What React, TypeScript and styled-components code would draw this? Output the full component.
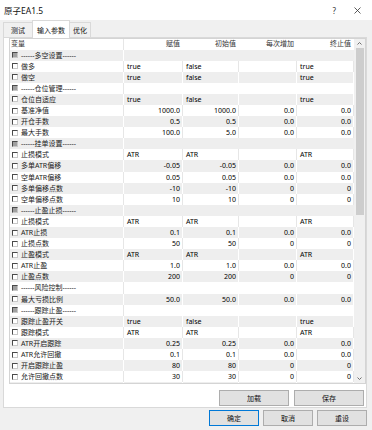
import React from "react";
import styled, { createGlobalStyle } from "styled-components";

const GlobalStyle = createGlobalStyle`
  html, body {
    margin: 0;
    padding: 0;
    background: #f0f0f0;
  }
  body {
    font-family: "Noto Sans", "Noto Sans CJK SC", sans-serif;
  }
`;

const COLS = "114px 59px 56px 58px 57px";

type Param = {
  label: string;
  group?: boolean;
  values?: string[];
};

const G = (label: string): Param => ({ label: `------${label}------`, group: true });
const P = (label: string, ...values: string[]): Param => ({ label, values });

const params: Param[] = [
  G("多空设置"),
  P("做多", "true", "false", "", "true"),
  P("做空", "true", "false", "", "true"),
  G("仓位管理"),
  P("仓位自适应", "true", "false", "", "true"),
  P("基准净值", "1000.0", "1000.0", "0.0", "0.0"),
  P("开仓手数", "0.5", "0.5", "0.0", "0.0"),
  P("最大手数", "100.0", "5.0", "0.0", "0.0"),
  G("挂单设置"),
  P("止损模式", "ATR", "ATR", "", "ATR"),
  P("多单ATR偏移", "-0.05", "-0.05", "0.0", "0.0"),
  P("空单ATR偏移", "0.05", "0.05", "0.0", "0.0"),
  P("多单偏移点数", "-10", "-10", "0", "0"),
  P("空单偏移点数", "10", "10", "0", "0"),
  G("止盈止损"),
  P("止损模式", "ATR", "ATR", "", "ATR"),
  P("ATR止损", "0.1", "0.1", "0.0", "0.0"),
  P("止损点数", "50", "50", "0", "0"),
  P("止盈模式", "ATR", "ATR", "", "ATR"),
  P("ATR止盈", "1.0", "1.0", "0.0", "0.0"),
  P("止盈点数", "200", "200", "0", "0"),
  G("风险控制"),
  P("最大亏损比例", "50.0", "50.0", "0.0", "0.0"),
  G("跟踪止盈"),
  P("跟踪止盈开关", "true", "false", "", "true"),
  P("跟踪模式", "ATR", "ATR", "", "ATR"),
  P("ATR开启跟踪", "0.25", "0.25", "0.0", "0.0"),
  P("ATR允许回撤", "0.1", "0.1", "0.0", "0.0"),
  P("开启跟踪止盈", "80", "80", "0", "0"),
  P("允许回撤点数", "30", "30", "0", "0"),
  P("", "", "", "", ""),
];

const isNumber = (v: string) => /^-?[\d.]+$/.test(v);

const Window = styled.div`
  width: 372px;
  height: 430px;
  background: #f0f0f0;
  display: flex;
  flex-direction: column;
  font-size: 7px;
  color: #000;
  overflow: hidden;
`;

const TitleBar = styled.div`
  height: 20px;
  flex: none;
  background: #fff;
  display: flex;
  align-items: center;
  padding-left: 4px;
  font-size: 8.5px;
  color: #111;
`;

const TitleButtons = styled.div`
  margin-left: auto;
  display: flex;
  align-items: center;
  gap: 18px;
  padding-right: 11px;
  font-size: 8px;
  color: #333;
`;

const TabStrip = styled.div`
  height: 17px;
  flex: none;
  display: flex;
  align-items: flex-end;
  padding-left: 3px;
`;

const Tab = styled.div<{ $active?: boolean; $pad: number }>`
  box-sizing: border-box;
  height: ${(p) => (p.$active ? "18px" : "15px")};
  padding: 0 ${(p) => p.$pad}px;
  display: flex;
  align-items: center;
  background: ${(p) => (p.$active ? "#fff" : "#f0f0f0")};
  border: 1px solid #d9d9d9;
  border-bottom: none;
  margin-bottom: ${(p) => (p.$active ? "-1px" : "0")};
  margin-right: -1px;
  position: relative;
  z-index: ${(p) => (p.$active ? 1 : 0)};
  color: #111;
`;

const Panel = styled.div`
  box-sizing: border-box;
  width: 364px;
  height: 371px;
  margin-left: 3px;
  flex: none;
  background: #fff;
  border: 1px solid #d9d9d9;
  padding-left: 5px;
  display: flex;
  flex-direction: column;
`;

const ListView = styled.div`
  box-sizing: border-box;
  width: 357px;
  height: 346px;
  border: 1px solid #d4d4d4;
  display: flex;
`;

const Table = styled.div`
  width: 344px;
  overflow: hidden;
  display: flex;
  flex-direction: column;
`;

const Row = styled.div<{ $shade?: boolean; $head?: boolean }>`
  flex: none;
  height: ${(p) => (p.$head ? "10.5px" : "11.1px")};
  display: grid;
  grid-template-columns: ${COLS};
  align-items: stretch;
  line-height: ${(p) => (p.$head ? "10.5px" : "11.1px")};
  background: ${(p) => (p.$shade ? "#eeeeee" : "#fff")};
`;

const Cell = styled.div<{ $right?: boolean; $line: string; $span?: number }>`
  box-sizing: border-box;
  padding: 0 2px 0 3px;
  text-align: ${(p) => (p.$right ? "right" : "left")};
  border-right: 1px solid ${(p) => p.$line};
  white-space: nowrap;
  overflow: hidden;
  grid-column: ${(p) => (p.$span ? `span ${p.$span}` : "auto")};
`;

const HeadCell = styled(Cell)`
  color: #333;
`;

const LabelCell = styled(Cell)`
  display: flex;
  align-items: center;
  gap: 3px;
  padding-left: 2px;
  color: #222;
`;

const Check = styled.span<{ $group?: boolean }>`
  box-sizing: border-box;
  width: 6px;
  height: 6px;
  flex: none;
  border-top: 1px solid #4a4a4a;
  border-left: 1px solid #4a4a4a;
  border-right: 1px solid #c8c8c8;
  border-bottom: 1px solid #c8c8c8;
  background: ${(p) => (p.$group ? "#a0a0a0" : "#fff")};
`;

const ScrollBar = styled.div`
  width: 11px;
  background: #f0f0f0;
  display: flex;
  flex-direction: column;
  align-items: center;
`;

const ScrollArrow = styled.div`
  height: 9px;
  flex: none;
  display: flex;
  align-items: center;
  justify-content: center;
`;

const Thumb = styled.div`
  width: 8px;
  height: 167px;
  background: #cdcdcd;
  flex: none;
`;

const Spacer = styled.div`
  flex: 1;
`;

const ButtonRow = styled.div<{ $gap: number }>`
  display: flex;
  justify-content: flex-end;
  gap: ${(p) => p.$gap}px;
`;

const PanelButtons = styled(ButtonRow)`
  margin-top: 6px;
  padding-right: 2px;
`;

const Footer = styled(ButtonRow)`
  margin-top: 2px;
  padding-right: 5px;
`;

const Button = styled.div<{ $w: number; $focus?: boolean }>`
  box-sizing: border-box;
  width: ${(p) => p.$w}px;
  height: 16px;
  display: flex;
  align-items: center;
  justify-content: center;
  background: #e1e1e1;
  border: 1px solid ${(p) => (p.$focus ? "#0078d7" : "#adadad")};
  color: #111;
`;

const Chevron = ({ up }: { up?: boolean }) => (
  <svg width="5" height="3" viewBox="0 0 5 3">
    <polyline
      points={up ? "0.5,2.5 2.5,0.5 4.5,2.5" : "0.5,0.5 2.5,2.5 4.5,0.5"}
      fill="none"
      stroke="#606060"
      strokeWidth="0.9"
    />
  </svg>
);

const CloseIcon = () => (
  <svg width="7" height="7" viewBox="0 0 7 7">
    <path d="M0.5 0.5 L6.5 6.5 M6.5 0.5 L0.5 6.5" stroke="#333" strokeWidth="0.8" />
  </svg>
);

function ParamRow({ p, index }: { p: Param; index: number }) {
  const shade = index % 2 === 0;
  const line = shade ? "#fff" : "#e6e6e6";
  if (p.group) {
    return (
      <Row $shade={shade}>
        <LabelCell $line={line}>
          <Check $group />
          {p.label}
        </LabelCell>
        <Cell $line="transparent" $span={4} />
      </Row>
    );
  }
  return (
    <Row $shade={shade}>
      <LabelCell $line={line}>
        <Check />
        {p.label}
      </LabelCell>
      {(p.values || []).map((v, i) => (
        <Cell key={i} $line={line} $right={isNumber(v)}>
          {v}
        </Cell>
      ))}
    </Row>
  );
}

export default function App() {
  return (
    <>
      <GlobalStyle />
      <Window>
        <TitleBar>
          原子EA1.5
          <TitleButtons>
            <span>?</span>
            <CloseIcon />
          </TitleButtons>
        </TitleBar>
        <TabStrip>
          <Tab $pad={7}>测试</Tab>
          <Tab $pad={4} $active>
            输入参数
          </Tab>
          <Tab $pad={3}>优化</Tab>
        </TabStrip>
        <Panel>
          <ListView>
            <Table>
              <Row $head>
                <HeadCell $line="#e6e6e6" style={{ paddingLeft: 1 }}>
                  变量
                </HeadCell>
                <HeadCell $line="transparent" $right>
                  赋值
                </HeadCell>
                <HeadCell $line="transparent" $right>
                  初始值
                </HeadCell>
                <HeadCell $line="transparent" $right>
                  每次增加
                </HeadCell>
                <HeadCell $line="transparent" $right>
                  终止值
                </HeadCell>
              </Row>
              {params.map((p, i) => (
                <ParamRow key={i} p={p} index={i} />
              ))}
            </Table>
            <ScrollBar>
              <ScrollArrow>
                <Chevron up />
              </ScrollArrow>
              <Thumb />
              <Spacer />
              <ScrollArrow>
                <Chevron />
              </ScrollArrow>
            </ScrollBar>
          </ListView>
          <PanelButtons $gap={5}>
            <Button $w={70}>加载</Button>
            <Button $w={70}>保存</Button>
          </PanelButtons>
        </Panel>
        <Footer $gap={4}>
          <Button $w={50} $focus>
            确定
          </Button>
          <Button $w={50}>取消</Button>
          <Button $w={50}>重设</Button>
        </Footer>
      </Window>
    </>
  );
}
